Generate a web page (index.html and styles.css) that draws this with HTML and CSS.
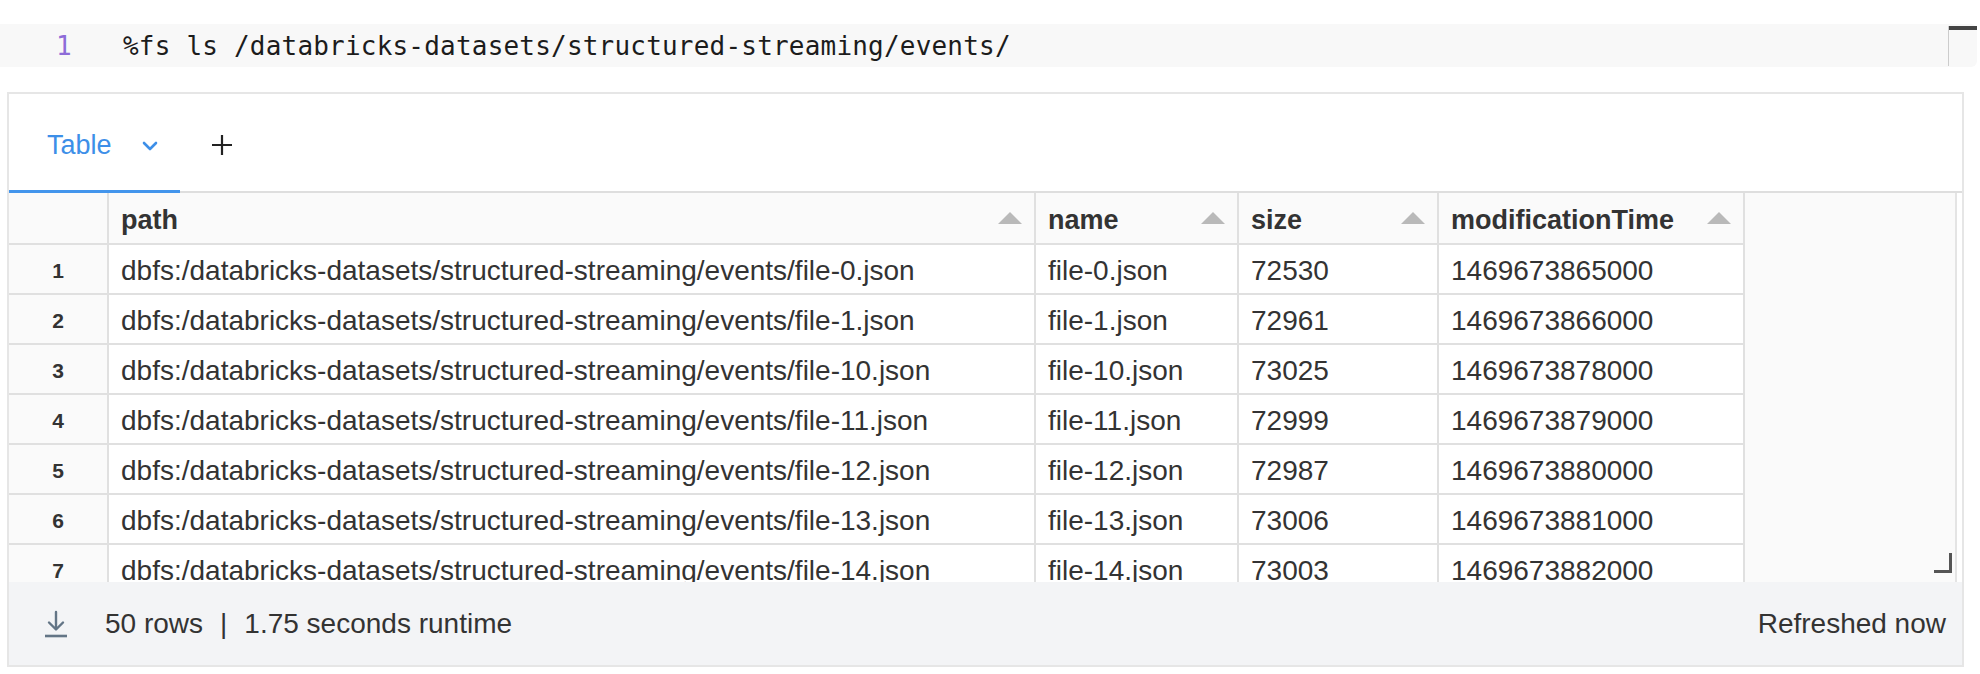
FILE: index.html
```html
<!DOCTYPE html>
<html lang="en">
<head>
<meta charset="utf-8">
<title>Notebook cell</title>
<link rel="stylesheet" href="styles.css">
</head>
<body>
<div class="editor">
  <div class="ln">1</div>
  <div class="code">%fs ls /databricks-datasets/structured-streaming/events/</div>
  <div class="minimap"><div class="thumb"></div></div>
</div>

<div class="output">
  <div class="tabs">
    <div class="tab">
      <span>Table</span>
      <svg class="chev" width="16" height="10" viewBox="0 0 16 10"><polyline points="2,2 8,8 14,2" fill="none" stroke="#3d8fe8" stroke-width="2.6" stroke-linecap="round" stroke-linejoin="round"/></svg>
    </div>
    <div class="add">
      <svg width="22" height="22" viewBox="0 0 22 22"><path d="M11 1v20M1 11h20" stroke="#222" stroke-width="2.2" fill="none"/></svg>
    </div>
  </div>

  <div class="table-wrap">
    <div class="grid">
      <div class="hc rn"></div>
      <div class="hc"><span>path</span><i class="sort"></i></div>
      <div class="hc"><span>name</span><i class="sort"></i></div>
      <div class="hc"><span>size</span><i class="sort"></i></div>
      <div class="hc"><span>modificationTime</span><i class="sort"></i></div>
      <div class="hc filler"></div>

      <div class="c rn">1</div><div class="c">dbfs:/databricks-datasets/structured-streaming/events/file-0.json</div><div class="c">file-0.json</div><div class="c">72530</div><div class="c">1469673865000</div><div class="fill"></div>
      <div class="c rn">2</div><div class="c">dbfs:/databricks-datasets/structured-streaming/events/file-1.json</div><div class="c">file-1.json</div><div class="c">72961</div><div class="c">1469673866000</div><div class="fill"></div>
      <div class="c rn">3</div><div class="c">dbfs:/databricks-datasets/structured-streaming/events/file-10.json</div><div class="c">file-10.json</div><div class="c">73025</div><div class="c">1469673878000</div><div class="fill"></div>
      <div class="c rn">4</div><div class="c">dbfs:/databricks-datasets/structured-streaming/events/file-11.json</div><div class="c">file-11.json</div><div class="c">72999</div><div class="c">1469673879000</div><div class="fill"></div>
      <div class="c rn">5</div><div class="c">dbfs:/databricks-datasets/structured-streaming/events/file-12.json</div><div class="c">file-12.json</div><div class="c">72987</div><div class="c">1469673880000</div><div class="fill"></div>
      <div class="c rn">6</div><div class="c">dbfs:/databricks-datasets/structured-streaming/events/file-13.json</div><div class="c">file-13.json</div><div class="c">73006</div><div class="c">1469673881000</div><div class="fill"></div>
      <div class="c rn">7</div><div class="c">dbfs:/databricks-datasets/structured-streaming/events/file-14.json</div><div class="c">file-14.json</div><div class="c">73003</div><div class="c">1469673882000</div><div class="fill"></div>
    </div>
    <span class="resize"></span>
  </div>

  <div class="footer">
    <svg class="dl" width="24" height="28" viewBox="0 0 24 28"><path d="M12 2v17M5 12.5L12 19.5l7-7" fill="none" stroke="#637586" stroke-width="2.4" stroke-linecap="round" stroke-linejoin="round"/><path d="M1 26h22" stroke="#637586" stroke-width="2.6"/></svg>
    <span class="stats">50 rows<span class="sep">|</span>1.75 seconds runtime</span>
    <span class="refreshed">Refreshed now</span>
  </div>
</div>
</body>
</html>
```

FILE: styles.css
```css
* { box-sizing: border-box; }

body {
  margin: 0;
  background: #ffffff;
  font-family: "Liberation Sans", Arial, sans-serif;
  color: #333333;
}

/* ---------- code editor ---------- */
.editor {
  margin: 24px 3px 0 0;
  height: 43px;
  background: #f8f8f8;
  border-radius: 0 6px 6px 0;
  display: flex;
  align-items: center;
}

.ln {
  width: 123px;
  padding-left: 56px;
  font-family: "DejaVu Sans Mono", monospace;
  font-size: 26px;
  color: #8e6cd8;
}

.code {
  flex: 1;
  font-family: "DejaVu Sans Mono", monospace;
  font-size: 26px;
  letter-spacing: 0.2px;
  color: #1c1c1c;
  white-space: pre;
}

.minimap {
  align-self: stretch;
  width: 29px;
  margin: 2px 0 1px 0;
  border-left: 1px solid #cccccc;
}

.thumb {
  height: 4px;
  background: #444444;
}

/* ---------- output panel ---------- */
.output {
  margin: 25px 16px 0 7px;
  border: 2px solid #e6e6e6;
}

.tabs {
  display: flex;
  align-items: flex-start;
  height: 99px;
  border-bottom: 2px solid #dedede;
}

.tab {
  display: flex;
  align-items: center;
  height: 99px;
  padding: 6px 22px 0 38px;
  font-size: 27px;
  color: #3d8fe8;
  border-bottom: 3px solid #4395ec;
}

.chev {
  margin-left: 30px;
  margin-top: 2px;
}

.add {
  display: flex;
  align-items: center;
  height: 96px;
  padding-top: 6px;
  margin-left: 31px;
}

/* ---------- table ---------- */
.table-wrap {
  position: relative;
  height: 389px;
  overflow: hidden;
}

.grid {
  display: grid;
  grid-template-columns: 100px 927px 203px 200px 306px 1fr;
  grid-template-rows: 52px;
  grid-auto-rows: 50px;
  background: #fafafa;
  margin-right: 5px;
  border-right: 2px solid #e4e4e4;
  height: 100%;
}

.hc {
  display: flex;
  align-items: center;
  padding: 4px 12px 0 12px;
  background: #fafafa;
  border-right: 2px solid #e0e0e0;
  border-bottom: 2px solid #e0e0e0;
  font-weight: bold;
  font-size: 27px;
  color: #333333;
}

.hc.filler {
  border: none;
}

.sort {
  margin-left: auto;
  margin-top: -4px;
  width: 0;
  height: 0;
  border-left: 12px solid transparent;
  border-right: 12px solid transparent;
  border-bottom: 12px solid #b9b9b9;
}

.c {
  display: flex;
  align-items: center;
  padding: 3px 12px 0 12px;
  background: #ffffff;
  border-right: 2px solid #e0e0e0;
  border-bottom: 2px solid #e0e0e0;
  font-size: 28px;
  color: #333333;
  white-space: nowrap;
}

.c.rn, .hc.rn {
  background: #fafafa;
}

.c.rn {
  justify-content: center;
  font-weight: bold;
  font-size: 21px;
  padding: 3px 0 0 0;
}

.fill {
  background: #fafafa;
}

.resize {
  position: absolute;
  right: 10px;
  bottom: 9px;
  width: 18px;
  height: 20px;
  border-right: 3px solid #555555;
  border-bottom: 3px solid #555555;
}

/* ---------- footer ---------- */
.footer {
  display: flex;
  align-items: center;
  height: 83px;
  padding: 0 16px 0 35px;
  background: #f3f4f6;
  font-size: 28px;
  color: #333333;
}

.dl {
  margin-right: 37px;
}

.sep {
  margin: 0 17px;
}

.refreshed {
  margin-left: auto;
}
```
